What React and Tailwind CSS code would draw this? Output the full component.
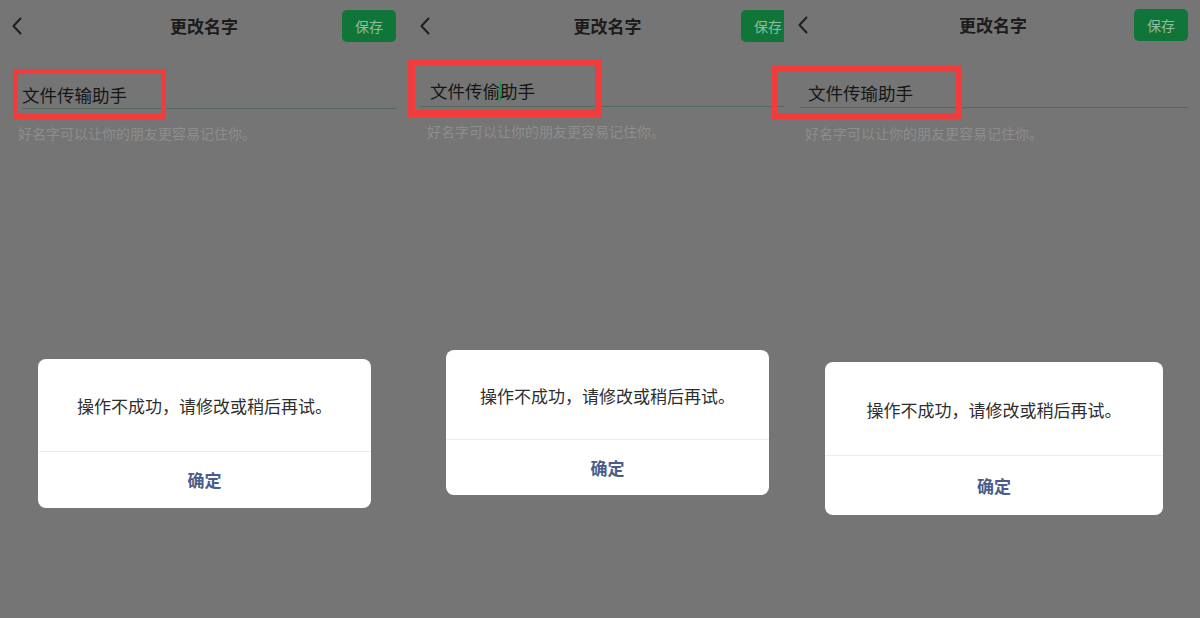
const font = { fontFamily: '"Noto Sans CJK SC", "Noto Sans", sans-serif' };

function Chevron() {
  return (
    <svg width="10" height="18" viewBox="0 0 10 18" fill="none">
      <polyline points="8.5,1.5 1.5,9 8.5,16.5" stroke="#1f1f1f" strokeWidth="2" strokeLinecap="round" strokeLinejoin="round" />
    </svg>
  );
}

function Panel({ w, inner, head, headH, field, hint, dialog, msgH, btnH, name, cursor }) {
  return (
    <div className={`${w} h-full shrink-0 overflow-hidden`}>
      <div className={`${inner} h-full flex flex-col`}>
        <div className={`${headH} ${head} grid grid-cols-[1fr_auto_1fr] items-center`}>
          <Chevron />
          <div className="text-[17px] leading-[24px] font-semibold text-[#1c1c1c]">更改名字</div>
          <div className="justify-self-end w-[54px] h-[32px] rounded-[5px] bg-[#107539] flex items-center justify-center text-[14px] text-[#93bb9f]">
            保存
          </div>
        </div>

        <div className={`${field} border-b border-[#52695c] flex items-center text-[17.5px] leading-[24px] text-[#161616]`}>
          {cursor ? (
            <>
              <span>{name.slice(0, 4)}</span>
              <span className="inline-block w-[2px] h-[21px] -mx-px bg-[#1f9a4a]" />
              <span>{name.slice(4)}</span>
            </>
          ) : (
            <span>{name}</span>
          )}
        </div>

        <div className={`${hint} text-[14px] leading-[20px] text-[#8d8d8d]`}>好名字可以让你的朋友更容易记住你。</div>

        <div className={`${dialog} bg-white rounded-[8px] flex flex-col overflow-hidden`}>
          <div className={`${msgH} flex items-center justify-center pt-[2px] text-[17px] text-[#2e2e2e]`}>
            操作不成功，请修改或稍后再试。
          </div>
          <div className="h-px bg-[#ececec]" />
          <div className={`${btnH} flex items-center justify-center text-[17px] font-bold text-[#4a5d8a]`}>确定</div>
        </div>
      </div>
    </div>
  );
}

export default function App() {
  return (
    <div className="relative w-[1200px] h-[618px] bg-[#757575] flex overflow-hidden" style={font}>
      <Panel
        w="w-[403px]"
        inner="w-[403px]"
        headH="h-[52px]"
        head="pl-[12px] pr-[7px]"
        field="ml-[22px] mr-[7px] mt-[31px] pb-[1px]"
        hint="ml-[18px] mt-[14px]"
        dialog="ml-[38px] w-[333px] mt-[216px]"
        msgH="h-[92px]"
        btnH="h-[56px]"
        name="文件传输助手"
      />
      <Panel
        w="w-[381px]"
        inner="w-[408px]"
        headH="h-[52px]"
        head="pl-[17px] pr-[16px]"
        field="ml-[17px] pl-[10px] mt-[27px] pb-[3px]"
        hint="ml-[24px] mt-[14px]"
        dialog="ml-[43px] w-[323px] mt-[209px]"
        msgH="h-[89px]"
        btnH="h-[55px]"
        name="文件传偷助手"
        cursor
      />
      <Panel
        w="w-[416px]"
        inner="w-[416px]"
        headH="h-[50px]"
        head="pl-[14px] pr-[12px]"
        field="ml-[16px] pl-[8px] mr-[12px] mt-[31px] pb-[2px]"
        hint="ml-[21px] mt-[15px]"
        dialog="ml-[41px] w-[338px] mt-[219px]"
        msgH="h-[93px]"
        btnH="h-[59px]"
        name="文件传瑜助手"
      />

      {/* red annotation boxes */}
      <div className="absolute left-[13px] top-[69px] w-[153px] h-[50px] border-[5px] border-[#f23b3b]" />
      <div className="absolute left-[408px] top-[59px] w-[194px] h-[58px] border-[7px] border-[#f23b3b]" />
      <div className="absolute left-[772px] top-[66px] w-[190px] h-[53px] border-[6px] border-[#f23b3b]" />
    </div>
  );
}
